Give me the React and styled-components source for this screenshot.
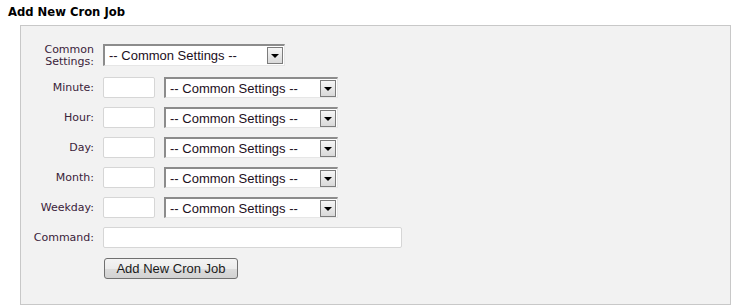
import React from 'react';
import styled, { createGlobalStyle } from 'styled-components';

const GlobalStyle = createGlobalStyle`
  html, body {
    margin: 0;
    padding: 0;
    background: #fff;
  }
  body {
    width: 740px;
    height: 307px;
    overflow: hidden;
  }
`;

const fields = ['Minute', 'Hour', 'Day', 'Month', 'Weekday'];

const Page = styled.div`
  padding: 5px 10px 0 8px;
  font-family: "DejaVu Sans", Verdana, sans-serif;
`;

const Title = styled.h3`
  margin: 0 0 6px 0;
  font-size: 11.6px;
  line-height: 14px;
  font-weight: bold;
  color: #000;
`;

const Panel = styled.div`
  margin-left: 12px;
  width: 709px;
  background: #f2f2f2;
  border: 1px solid #c8c8c8;
  padding: 18px 0 25px 0;
`;

const Form = styled.form`
  display: grid;
  grid-template-columns: 73px auto;
  column-gap: 9px;
  row-gap: 9px;
  align-items: center;
`;

const Label = styled.label`
  text-align: right;
  font-size: 11px;
  line-height: 12px;
  color: #3a233a;
`;

const Fields = styled.div`
  display: flex;
  align-items: center;
  gap: 9px;
  margin-bottom: ${({ $extra }) => $extra || 0}px;
`;

const TextBox = styled.input`
  box-sizing: border-box;
  width: ${({ $w }) => $w}px;
  height: 21px;
  margin: 0;
  padding: 0 3px;
  border: 1px solid #d6d6d6;
  border-radius: 2px;
  background: #fff;
  font-family: "Liberation Sans", Arial, sans-serif;
  font-size: 13px;
  outline: none;
`;

const SelectBox = styled.div`
  box-sizing: border-box;
  width: ${({ $w }) => $w}px;
  height: ${({ $h }) => $h}px;
  display: flex;
  align-items: center;
  background: #fff;
  border-top: 2px solid #8c8c8c;
  border-left: 2px solid #8c8c8c;
  border-right: 1px solid #e6e6e6;
  border-bottom: 1px solid #e6e6e6;
  padding-right: 1px;
`;

const NativeSelect = styled.select`
  flex: 1;
  min-width: 0;
  height: 100%;
  appearance: none;
  -webkit-appearance: none;
  border: none;
  background: transparent;
  margin: 0;
  padding: 0 0 0 4px;
  font-family: "Liberation Sans", Arial, sans-serif;
  font-size: 13px;
  color: #1c0f1c;
  outline: none;
`;

const ArrowBox = styled.span`
  box-sizing: border-box;
  width: 16px;
  height: 17px;
  display: flex;
  align-items: center;
  justify-content: center;
  border: 1px solid #7c7c7c;
  background: linear-gradient(#f6f6f6, #d9d9d9);
`;

const Triangle = styled.span`
  width: 0;
  height: 0;
  border-left: 4px solid transparent;
  border-right: 4px solid transparent;
  border-top: 4px solid #000;
  margin-top: 1px;
`;

const Button = styled.button`
  box-sizing: border-box;
  justify-self: start;
  width: 134px;
  height: 21px;
  margin: 1px 0 0 1px;
  padding: 0;
  border: 1px solid #707070;
  border-radius: 3px;
  background: linear-gradient(#f4f4f4 0%, #ececec 50%, #dcdcdc 51%, #d2d2d2 100%);
  font-family: "Liberation Sans", Arial, sans-serif;
  font-size: 13px;
  line-height: 19px;
  color: #1a1a1a;
  cursor: pointer;
`;

const Spacer = styled.div``;

const CommonSelect = ({ width, height = 21 }) => (
  <SelectBox $w={width} $h={height}>
    <NativeSelect defaultValue="">
      <option value="">-- Common Settings --</option>
    </NativeSelect>
    <ArrowBox>
      <Triangle />
    </ArrowBox>
  </SelectBox>
);

const App = () => {
  return (
    <Page>
      <GlobalStyle />
      <Title>Add New Cron Job</Title>
      <Panel>
        <Form onSubmit={(e) => e.preventDefault()}>
          <Label>Common<br />Settings:</Label>
          <Fields $extra={2}>
            <CommonSelect width={182} height={22} />
          </Fields>

          {fields.map((name) => (
            <React.Fragment key={name}>
              <Label>{name}:</Label>
              <Fields>
                <TextBox type="text" $w={52} />
                <CommonSelect width={174} />
              </Fields>
            </React.Fragment>
          ))}

          <Label>Command:</Label>
          <Fields>
            <TextBox type="text" $w={299} />
          </Fields>

          <Spacer />
          <Button type="submit">Add New Cron Job</Button>
        </Form>
      </Panel>
    </Page>
  );
};

export default App;
